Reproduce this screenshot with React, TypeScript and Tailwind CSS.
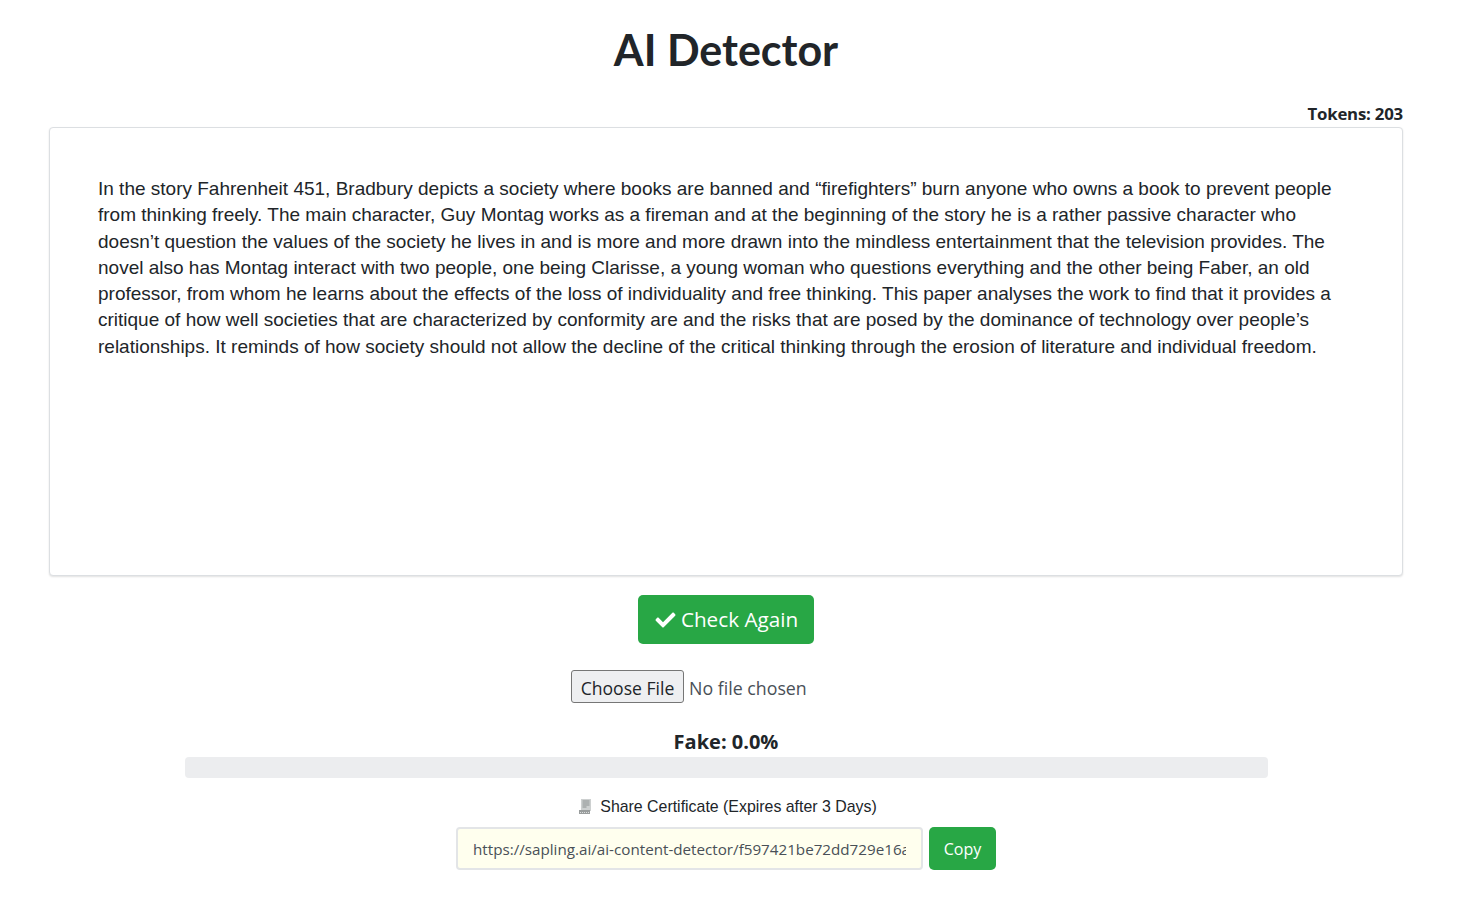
import { FaCheck } from 'react-icons/fa'

const essay =
  'In the story Fahrenheit 451, Bradbury depicts a society where books are banned and “firefighters” burn anyone who owns a book to prevent people from thinking freely. The main character, Guy Montag works as a fireman and at the beginning of the story he is a rather passive character who doesn’t question the values of the society he lives in and is more and more drawn into the mindless entertainment that the television provides. The novel also has Montag interact with two people, one being Clarisse, a young woman who questions everything and the other being Faber, an old professor, from whom he learns about the effects of the loss of individuality and free thinking. This paper analyses the work to find that it provides a critique of how well societies that are characterized by conformity are and the risks that are posed by the dominance of technology over people’s relationships. It reminds of how society should not allow the decline of the critical thinking through the erosion of literature and individual freedom.'

function ReceiptIcon() {
  return (
    <svg width="13" height="16" viewBox="0 0 13 16" className="shrink-0">
      <path d="M2 0h10v12H2z" fill="#cdd0d0" />
      <path d="M3.5 2h7M3.5 4h7M3.5 6h7M3.5 8h4" stroke="#8d9292" strokeWidth="1" />
      <path d="M0 11h11v4H0z" fill="#999d9d" />
      <path d="M1 13.5h1M3 13.5h1M5 13.5h1M7 13.5h1M9 13.5h1" stroke="#dcdede" strokeWidth="1" />
    </svg>
  )
}

export default function App() {
  return (
    <div className="min-h-screen bg-white text-[#212529] font-['Open_Sans',sans-serif]">
      <div className="w-[1452px] px-[49px] flex flex-col items-center">
        <h1 className="mt-[21px] h-[58px] text-[43px] leading-[58px] font-bold font-['Lato',sans-serif]">
          AI Detector
        </h1>

        <div className="mt-[23px] w-full text-right text-[16.8px] leading-[24px] font-bold tracking-[-0.2px]">
          Tokens: 203
        </div>

        <div className="mt-[1px] w-full h-[449px] bg-white border border-[#dcdfe2] rounded-[4px] shadow-[0_1px_2px_rgba(0,0,0,0.12)] pt-[48px] pl-[48px] pr-[48px] font-['Liberation_Sans',sans-serif] text-[19px] leading-[26.3px]">
          {essay}
        </div>

        <button className="mt-[19px] h-[49px] w-[176px] flex items-center justify-center gap-[4px] rounded-[5px] bg-[#28a745] text-white text-[20.7px]">
          <FaCheck className="w-[23px] h-[20px]" />
          Check Again
        </button>

        <input
          type="file"
          className="mt-[26px] ml-[4px] w-[314px] text-[17.8px] leading-[34px] text-[#495057] file:h-[33px] file:w-[113px] file:mr-[5px] file:px-0 file:bg-[#eeeff1] file:text-[#212529] file:border file:border-[#767676] file:rounded-[3px] file:text-[17.6px]"
        />

        <div className="mt-[23px] text-[20px] leading-[28px] font-bold">Fake: 0.0%</div>

        <div className="mt-[1px] w-[1083px] h-[21px] rounded-[4px] bg-[#ecedef]" />

        <div className="mt-[19px] ml-[4px] h-[20px] flex items-center gap-[8px] font-['Liberation_Sans',sans-serif] text-[15.9px] leading-[20px]">
          <ReceiptIcon />
          Share Certificate (Expires after 3 Days)
        </div>

        <div className="mt-[10px] flex items-stretch gap-[6px]">
          <input
            readOnly
            value="https://sapling.ai/ai-content-detector/f597421be72dd729e16a"
            className="w-[467px] h-[43px] pl-[15px] pr-[15px] pt-[1px] rounded-[4px] border-2 border-[#e3e5e7] bg-[#ffffee] text-[#495057] text-[15.2px] outline-none"
          />
          <button className="w-[67px] h-[43px] rounded-[5px] bg-[#28a745] text-white text-[16px]">
            Copy
          </button>
        </div>
      </div>
    </div>
  )
}
